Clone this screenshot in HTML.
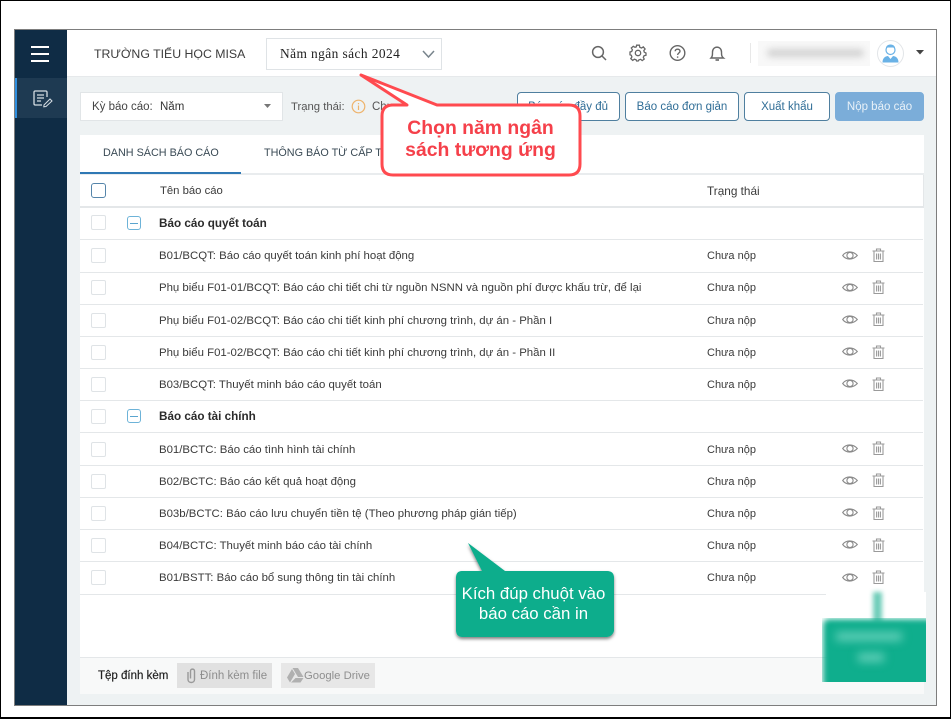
<!DOCTYPE html>
<html lang="vi"><head><meta charset="utf-8"><title>Báo cáo</title>
<style>
*{box-sizing:border-box}
html,body{margin:0;padding:0;width:951px;height:719px;overflow:hidden;background:#fff}
body{font-family:"Liberation Sans","DejaVu Sans",sans-serif;color:#333;font-size:12px}
.a{position:absolute;white-space:nowrap}
#wrap{position:absolute;left:0;top:0;width:951px;height:719px;filter:blur(.35px)}
.rowline{position:absolute;left:80px;width:843px;height:1px;background:#e4e7e9}
.t{position:absolute;left:159px;white-space:nowrap;font-size:11.4px;color:#3a3a3a;line-height:14px}
.b{font-weight:bold;font-size:11.7px;color:#2b2b2b}
.s{position:absolute;left:707px;font-size:11px;color:#3a3a3a;line-height:14px;white-space:nowrap}
.c{position:absolute;left:91px;width:15px;height:15px;border:1px solid #dfe3e6;border-radius:2px;background:#fff}
.m{position:absolute;left:127px;width:14px;height:14px;border:1px solid #6db3d8;border-radius:3px;background:#fff}
.m:after{content:"";position:absolute;left:2px;right:2px;top:5.5px;height:1px;background:#5aa5cf}
.btn{position:absolute;top:92px;height:29px;border:1px solid #4f7f9f;border-radius:4px;background:#fff;color:#2f6d96;font-size:11.5px;text-align:center;line-height:29px;white-space:nowrap}
svg{position:absolute;overflow:visible}
</style></head><body>
<div id="wrap">
<div class="a" style="left:0;top:0;width:951px;height:719px;border:1px solid #000;border-width:1px 1px 2px 1px"></div>

<!-- frame -->
<div class="a" style="left:14px;top:29px;width:923px;height:677px;background:#eef2f3;border:1px solid #7d7d7d"></div>
<div class="a" style="left:15px;top:30px;width:52px;height:675px;background:#0f2c45"></div>
<div class="a" style="left:15px;top:78px;width:52px;height:40px;background:#1e3a52"></div>
<div class="a" style="left:15px;top:78px;width:2px;height:40px;background:#2f8fe0"></div>
<div class="a" style="left:31px;top:46px;width:18px;height:2px;background:#fff"></div>
<div class="a" style="left:31px;top:53px;width:18px;height:2px;background:#fff"></div>
<div class="a" style="left:31px;top:60px;width:18px;height:2px;background:#fff"></div>
<svg style="left:33px;top:90px" width="20" height="18" viewBox="0 0 20 18" fill="none" stroke="#d5dde3" stroke-width="1.3"><path d="M14 7V2.2Q14 1 12.8 1H2.2Q1 1 1 2.2V13.8Q1 15 2.2 15H9"/><path d="M4 5H11M4 8H11M4 11H8" stroke-width="1.2"/><path d="M11 15L17 9L19 11L13 16.5L10.8 16.8Z" stroke-width="1"/></svg>

<!-- header -->
<div class="a" style="left:67px;top:30px;width:869px;height:47px;background:#fff;border-bottom:1px solid #e6e9eb"></div>
<div class="a" style="left:94px;top:46px;font-size:12.3px;color:#3c3c3c;line-height:16px">TRƯỜNG TIỂU HỌC MISA</div>
<div class="a" style="left:266px;top:38px;width:176px;height:32px;border:1px solid #dfe3e6;background:#fff"></div>
<div class="a" style="left:280px;top:46px;font-family:'Liberation Serif',serif;font-size:13.4px;letter-spacing:.42px;color:#222;line-height:16px">Năm ngân sách 2024</div>
<svg style="left:422px;top:50px" width="14" height="9" fill="none" stroke="#78848c" stroke-width="1.5"><path d="M1 1L6.5 7L12 1"/></svg>

<svg style="left:591px;top:45px" width="17" height="17" fill="none" stroke="#666" stroke-width="1.5"><circle cx="7" cy="7" r="5.4"/><path d="M11 11L15 15"/></svg>
<svg style="left:629px;top:44px" width="18" height="18" viewBox="0 0 18 18" fill="none" stroke="#666" stroke-width="1.3"><circle cx="9" cy="9" r="2.7"/><path d="M7.6 1.2H10.4L10.8 3.3L12.5 4L14.3 2.9L16.1 5L14.8 6.6L15.3 8.2L17 9V11.2L15.1 11.7L14.3 13.3L15.2 15.1L13.2 16.6L11.6 15.3L9.9 15.9L9.2 17H7.6L7.1 15.8L5.4 15.2L3.7 16.4L1.8 14.6L2.9 12.9L2.3 11.3L1 10.8V8L2.7 7.5L3.4 5.8L2.3 4L4.3 2.3L6 3.3L7.3 2.9Z"/></svg>
<svg style="left:669px;top:44px" width="18" height="18" fill="none" stroke="#666" stroke-width="1.4"><circle cx="8.5" cy="9" r="7.3"/><path d="M6.2 7.2C6.2 4.5 11 4.5 11 7.2C11 9 8.6 9 8.6 11"/><path d="M8.6 12.4V13.8"/></svg>
<svg style="left:709px;top:44px" width="17" height="18" fill="none" stroke="#666" stroke-width="1.4"><path d="M2 14C3.5 12.5 3.5 11 3.5 8C3.5 1.5 12.5 1.5 12.5 8C12.5 11 12.5 12.5 14.5 14Z"/><path d="M6.5 16H10" stroke-width="1.6"/></svg>
<div class="a" style="left:750px;top:43px;width:1px;height:20px;background:#e8e8e8"></div>
<div class="a" style="left:758px;top:41px;width:112px;height:25px;background:#f8f8f8"></div>
<div class="a" style="left:767px;top:49px;width:97px;height:8px;background:#d2d2d2;filter:blur(3.5px);border-radius:4px"></div>
<svg style="left:877px;top:40px" width="27" height="27" viewBox="0 0 27 27"><circle cx="13.5" cy="13.5" r="13" fill="#fff" stroke="#e2e5e8"/><circle cx="13.5" cy="10" r="4.5" fill="#fff" stroke="#6ab2e6" stroke-width="1.2"/><path d="M9 7.5C10 3.5 17 3.5 18 7.5Z" fill="#6ab2e6"/><path d="M5.5 22.5C5.5 17.5 9 16 11 16L13.5 19L16 16C18 16 21.5 17.5 21.5 22.5Z" fill="#6ab2e6"/></svg>
<svg style="left:916px;top:50px" width="8" height="5"><path d="M0 0H8L4 4.5Z" fill="#444"/></svg>

<!-- toolbar -->
<div class="a" style="left:80px;top:92px;width:203px;height:29px;background:#fff;border:1px solid #e1e5e7"></div>
<div class="a" style="left:92px;top:100px;font-size:11.5px;color:#444;line-height:14px">Kỳ báo cáo:</div>
<div class="a" style="left:160px;top:100px;font-size:11.5px;color:#333;line-height:14px">Năm</div>
<svg style="left:264px;top:104px" width="8" height="5"><path d="M0 0H7L3.5 4Z" fill="#777"/></svg>
<div class="a" style="left:291px;top:100px;font-size:11.3px;color:#555;line-height:14px">Trạng thái:</div>
<svg style="left:351px;top:99px" width="15" height="15" fill="none" stroke="#eeb36b" stroke-width="1.2"><circle cx="7.5" cy="7.5" r="6.3"/><path d="M7.5 6.5V11M7.5 4V5.2"/></svg>
<div class="a" style="left:372px;top:100px;font-size:11.5px;color:#555;line-height:14px">Chưa nộp</div>
<div class="btn" style="left:517px;width:103px;text-align:right;padding-right:11px">Báo cáo đầy đủ</div>
<div class="btn" style="left:625px;width:114px">Báo cáo đơn giản</div>
<div class="btn" style="left:744px;width:86px">Xuất khẩu</div>
<div class="btn" style="left:835px;width:89px;background:#7badd9;border-color:#7badd9;color:#e8f1f8">Nộp báo cáo</div>

<!-- panel -->
<div class="a" style="left:80px;top:135px;width:844px;height:559px;background:#fff"></div>
<div class="a" style="left:80px;top:694px;width:856px;height:11px;background:#eef2f3"></div>
<div class="a" style="left:103px;top:146px;font-size:10.8px;color:#3a4a55;line-height:15px">DANH SÁCH BÁO CÁO</div>
<div class="a" style="left:264px;top:146px;font-size:10.8px;color:#3a4a55;line-height:15px">THÔNG BÁO TỪ CẤP TRÊN</div>
<div class="a" style="left:80px;top:173px;width:844px;height:2px;background:#e9ecee"></div>
<div class="a" style="left:80px;top:172px;width:161px;height:2px;background:#2f78b4"></div>

<!-- table head -->
<div class="a" style="left:80px;top:206px;width:844px;height:2px;background:#e4e7e9"></div>
<div class="a" style="left:923px;top:175px;width:1px;height:33px;background:#e4e7e9"></div>
<div class="a" style="left:91px;top:183px;width:15px;height:15px;border:1.3px solid #5585aa;border-radius:3px"></div>
<div class="t" style="top:184px;font-size:11.3px;left:160px">Tên báo cáo</div>
<div class="s" style="top:184px;font-size:11.8px">Trạng thái</div>

<!-- lines -->
<div class="rowline" style="top:239px"></div><div class="rowline" style="top:272px"></div><div class="rowline" style="top:304px"></div><div class="rowline" style="top:336px"></div><div class="rowline" style="top:368px"></div><div class="rowline" style="top:400px"></div><div class="rowline" style="top:432px"></div><div class="rowline" style="top:465px"></div><div class="rowline" style="top:497px"></div><div class="rowline" style="top:529px"></div><div class="rowline" style="top:561px"></div><div class="rowline" style="top:594px"></div>

<!-- checkboxes -->
<div class="c" style="top:215px"></div><div class="c" style="top:248px"></div><div class="c" style="top:280px"></div><div class="c" style="top:313px"></div><div class="c" style="top:345px"></div><div class="c" style="top:377px"></div><div class="c" style="top:409px"></div><div class="c" style="top:442px"></div><div class="c" style="top:474px"></div><div class="c" style="top:506px"></div><div class="c" style="top:538px"></div><div class="c" style="top:570px"></div>
<div class="m" style="top:216px"></div><div class="m" style="top:409px"></div>

<!-- text -->
<div class="t b" style="top:217px">Báo cáo quyết toán</div>
<div class="t" style="top:249px">B01/BCQT: Báo cáo quyết toán kinh phí hoạt động</div>
<div class="t" style="top:281px">Phụ biểu F01-01/BCQT: Báo cáo chi tiết chi từ nguồn NSNN và nguồn phí được khấu trừ, để lại</div>
<div class="t" style="top:314px">Phụ biểu F01-02/BCQT: Báo cáo chi tiết kinh phí chương trình, dự án - Phần I</div>
<div class="t" style="top:346px">Phụ biểu F01-02/BCQT: Báo cáo chi tiết kinh phí chương trình, dự án - Phần II</div>
<div class="t" style="top:378px">B03/BCQT: Thuyết minh báo cáo quyết toán</div>
<div class="t b" style="top:410px">Báo cáo tài chính</div>
<div class="t" style="top:443px">B01/BCTC: Báo cáo tình hình tài chính</div>
<div class="t" style="top:475px">B02/BCTC: Báo cáo kết quả hoạt động</div>
<div class="t" style="top:507px">B03b/BCTC: Báo cáo lưu chuyển tiền tệ (Theo phương pháp gián tiếp)</div>
<div class="t" style="top:539px">B04/BCTC: Thuyết minh báo cáo tài chính</div>
<div class="t" style="top:571px">B01/BSTT: Báo cáo bổ sung thông tin tài chính</div>

<div class="s" style="top:249px">Chưa nộp</div><div class="s" style="top:281px">Chưa nộp</div><div class="s" style="top:314px">Chưa nộp</div><div class="s" style="top:346px">Chưa nộp</div><div class="s" style="top:378px">Chưa nộp</div><div class="s" style="top:443px">Chưa nộp</div><div class="s" style="top:475px">Chưa nộp</div><div class="s" style="top:507px">Chưa nộp</div><div class="s" style="top:539px">Chưa nộp</div><div class="s" style="top:571px">Chưa nộp</div>

<!-- icons -->
<svg width="0" height="0"><defs>
<g id="eye" fill="none" stroke="#8a8a8a" stroke-width="1.1"><path d="M.7 5.5C4 .8 11 .8 15.3 5.5C11 10.2 4 10.2 .7 5.5Z"/><circle cx="8" cy="5.5" r="3.1"/></g>
<g id="bin" fill="none" stroke="#9a9a9a" stroke-width="1.1"><path d="M.5 3H12.5M4.5 3V1H8.5V3M2 3V13.5H11V3M4.6 5.5V11.5M6.5 5.5V11.5M8.4 5.5V11.5"/></g>
</defs></svg>
<svg style="left:842px;top:250px" width="16" height="11"><use href="#eye"/></svg><svg style="left:872px;top:248px" width="13" height="14"><use href="#bin"/></svg>
<svg style="left:842px;top:282px" width="16" height="11"><use href="#eye"/></svg><svg style="left:872px;top:280px" width="13" height="14"><use href="#bin"/></svg>
<svg style="left:842px;top:314px" width="16" height="11"><use href="#eye"/></svg><svg style="left:872px;top:312px" width="13" height="14"><use href="#bin"/></svg>
<svg style="left:842px;top:346px" width="16" height="11"><use href="#eye"/></svg><svg style="left:872px;top:345px" width="13" height="14"><use href="#bin"/></svg>
<svg style="left:842px;top:378px" width="16" height="11"><use href="#eye"/></svg><svg style="left:872px;top:377px" width="13" height="14"><use href="#bin"/></svg>
<svg style="left:842px;top:443px" width="16" height="11"><use href="#eye"/></svg><svg style="left:872px;top:441px" width="13" height="14"><use href="#bin"/></svg>
<svg style="left:842px;top:475px" width="16" height="11"><use href="#eye"/></svg><svg style="left:872px;top:473px" width="13" height="14"><use href="#bin"/></svg>
<svg style="left:842px;top:507px" width="16" height="11"><use href="#eye"/></svg><svg style="left:872px;top:506px" width="13" height="14"><use href="#bin"/></svg>
<svg style="left:842px;top:539px" width="16" height="11"><use href="#eye"/></svg><svg style="left:872px;top:538px" width="13" height="14"><use href="#bin"/></svg>
<svg style="left:842px;top:572px" width="16" height="11"><use href="#eye"/></svg><svg style="left:872px;top:570px" width="13" height="14"><use href="#bin"/></svg>

<!-- footer -->
<div class="a" style="left:80px;top:657px;width:844px;height:37px;background:#f8f9f9;border-top:1px solid #e4e7e9"></div>
<div class="a" style="left:98px;top:669px;font-size:11.5px;color:#222;line-height:14px;-webkit-text-stroke:.2px #222">Tệp đính kèm</div>
<div class="a" style="left:177px;top:663px;width:95px;height:25px;background:#e1e1e1"></div>
<svg style="left:187px;top:668px" width="9" height="16" fill="none" stroke="#999" stroke-width="1.4"><path d="M1 4V11.5C1 15.5 7.5 15.5 7.5 11.5V3C7.5 .5 3.5 .5 3.5 3V10.5"/></svg>
<div class="a" style="left:200px;top:669px;font-size:11.5px;color:#8d8d8d;line-height:14px">Đính kèm file</div>
<div class="a" style="left:281px;top:663px;width:94px;height:25px;background:#e7e7e7"></div>
<svg style="left:287px;top:668px" width="17" height="15"><path d="M5.5 0H11L16.5 9H11Z M5 1L8 6L3 14.5L0 9.5Z M8.5 10H16.5L13.5 14.5H4Z" fill="#b0b0b0"/></svg>
<div class="a" style="left:304px;top:669px;font-size:11.3px;color:#8f8f8f;line-height:14px">Google Drive</div>

<!-- red callout -->
<svg style="left:0;top:0" width="951" height="719"><path d="M361 75L437 105H569Q580 105 580 116V164Q580 175 569 175H393Q382 175 382 164V116Q382 105 393 105H407Z" fill="#fff" stroke="#ff4a4f" stroke-width="3" stroke-linejoin="round"/></svg>
<div class="a" style="left:381px;top:117px;width:199px;text-align:center;font-size:19.4px;font-weight:bold;color:#f5404a;line-height:22px;white-space:normal">Chọn năm ngân<br>sách tương ứng</div>

<!-- green callout -->
<svg style="left:0;top:0" width="951" height="719"><defs><filter id="sh" x="-20%" y="-20%" width="140%" height="140%"><feDropShadow dx="0" dy="2" stdDeviation="1.5" flood-color="#000" flood-opacity=".5"/></filter></defs><path d="M462 571H482L468 543L505 571H607Q614 571 614 578V631Q612 637 606 637H463Q456 637 456 630V578Q456 571 462 571Z" fill="#07ad8c" filter="url(#sh)"/></svg>
<div class="a" style="left:452px;top:584px;width:163px;text-align:center;font-size:16.8px;color:#fff;line-height:20px;white-space:normal">Kích đúp chuột vào<br>báo cáo cần in</div>

<!-- blurred patch -->
<div class="a" style="left:826px;top:592px;width:100px;height:40px;background:#fff"></div>
<div class="a" style="left:873px;top:592px;width:9px;height:30px;background:#6fcdb9;filter:blur(2.5px)"></div>
<div class="a" style="left:822px;top:618px;width:104px;height:64px;overflow:hidden;"><div style="position:absolute;left:1px;top:1px;width:110px;height:70px;background:#0fae8d;border-radius:6px;filter:blur(3px)"></div><div style="position:absolute;left:14px;top:14px;width:66px;height:9px;background:#5ecdb6;filter:blur(4.5px)"></div><div style="position:absolute;left:36px;top:35px;width:26px;height:9px;background:#5ecdb6;filter:blur(4.5px)"></div></div>
</div>
</body></html>
